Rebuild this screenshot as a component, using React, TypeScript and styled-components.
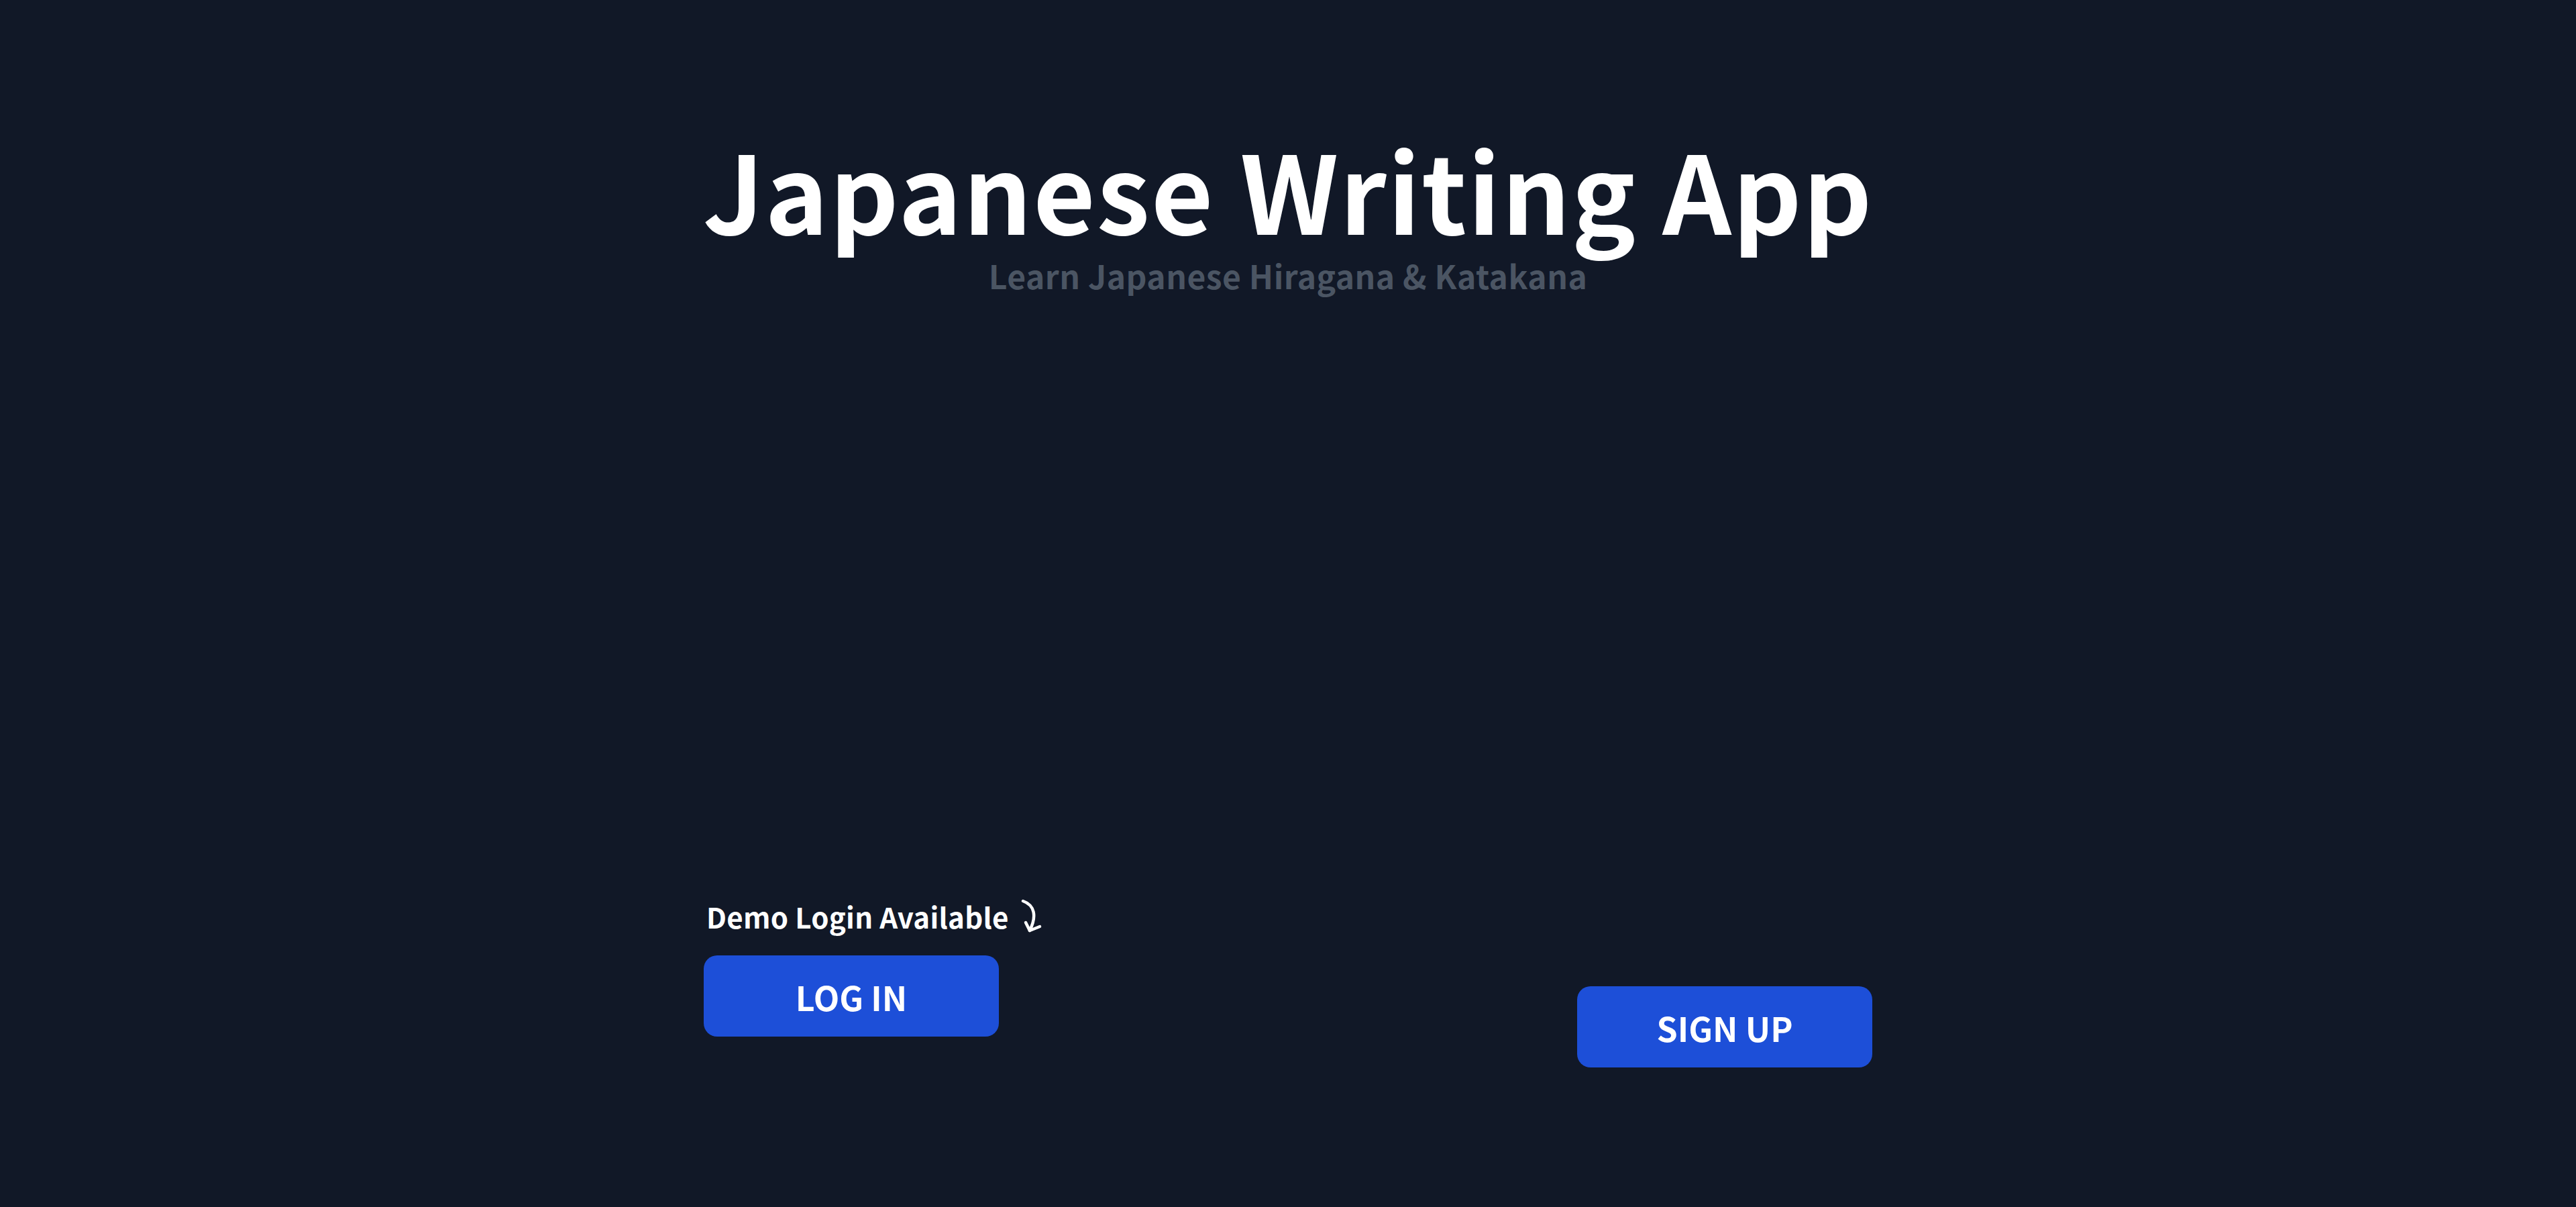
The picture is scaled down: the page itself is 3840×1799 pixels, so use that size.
import React from "react";
import styled, { createGlobalStyle } from "styled-components";

const Global = createGlobalStyle`
  html, body { margin: 0; padding: 0; background: #111827; }
  body { font-family: "Noto Sans CJK JP", "Noto Sans", sans-serif; }
  #root { min-height: 100vh; }
`;

const Page = styled.main`
  min-height: 1799px;
  background: #111827;
  display: flex;
  justify-content: center;
`;

const Container = styled.div`
  width: 1742px;
  display: flex;
  flex-direction: column;
  align-items: stretch;
  padding-top: 200px;
`;

const Header = styled.header`
  display: flex;
  flex-direction: column;
  align-items: center;
`;

const Title = styled.h1`
  margin: 0;
  font-size: 160px;
  line-height: 160px;
  font-weight: 700;
  color: #ffffff;
  white-space: nowrap;
  letter-spacing: 1.8px;
`;

const Subtitle = styled.p`
  margin: 26px 0 0;
  font-size: 48px;
  line-height: 48px;
  font-weight: 600;
  color: #4b5563;
  white-space: nowrap;
  letter-spacing: 0.5px;
`;

const Actions = styled.div`
  margin-top: 900px;
  display: flex;
  justify-content: space-between;
  align-items: flex-start;
`;

const Column = styled.div<{ $offset?: number }>`
  display: flex;
  flex-direction: column;
  align-items: flex-start;
  gap: 26px;
  padding-top: ${(p) => p.$offset ?? 0}px;
`;

const Hint = styled.div`
  display: flex;
  align-items: center;
  gap: 16px;
  padding-left: 4px;
  font-size: 42px;
  line-height: 64px;
  font-weight: 700;
  color: #ffffff;
  letter-spacing: 0.3px;
`;

const Button = styled.button`
  width: 440px;
  height: 121px;
  border: none;
  border-radius: 20px;
  background: #1d4fd8;
  color: #ffffff;
  font-family: inherit;
  font-size: 50px;
  font-weight: 700;
  cursor: pointer;
`;

const Arrow = () => (
  <svg width="36" height="54" viewBox="0 0 36 54" fill="none" stroke="#ffffff" strokeWidth="4.5" strokeLinecap="round" strokeLinejoin="round">
    <path d="M5 4 C 22 10, 26 26, 15 48" />
    <path d="M9 36 L 15 48 L 30 42" />
  </svg>
);

export default function App() {
  return (
    <>
      <Global />
      <Page>
        <Container>
          <Header>
            <Title>Japanese Writing App</Title>
            <Subtitle>Learn Japanese Hiragana &amp; Katakana</Subtitle>
          </Header>
          <Actions>
            <Column>
              <Hint>
                Demo Login Available
                <Arrow />
              </Hint>
              <Button>LOG IN</Button>
            </Column>
            <Column $offset={136}>
              <Button>SIGN UP</Button>
            </Column>
          </Actions>
        </Container>
      </Page>
    </>
  );
}
